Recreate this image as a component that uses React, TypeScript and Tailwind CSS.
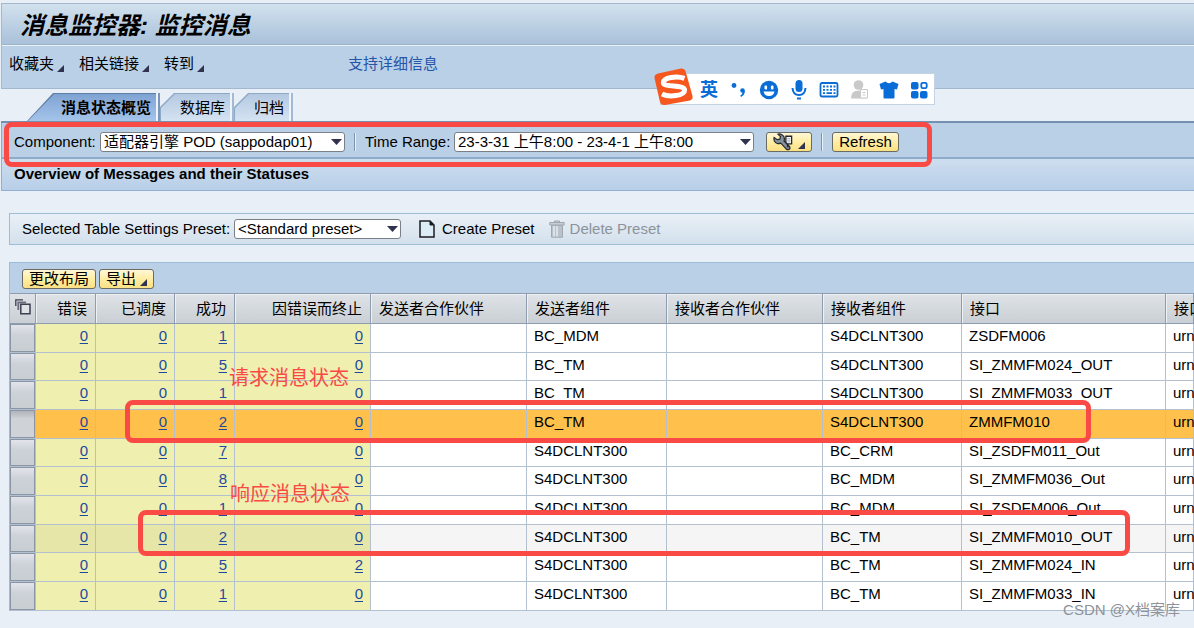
import { useState, type ReactNode } from "react";
import clsx from "clsx";

type Row = {
  counts: [number, number, number, number];
  sender: string;
  receiver: string;
  iface: string;
};

const ROWS: Row[] = [
  { counts: [0, 0, 1, 0], sender: "BC_MDM", receiver: "S4DCLNT300", iface: "ZSDFM006" },
  { counts: [0, 0, 5, 0], sender: "BC_TM", receiver: "S4DCLNT300", iface: "SI_ZMMFM024_OUT" },
  { counts: [0, 0, 1, 0], sender: "BC_TM", receiver: "S4DCLNT300", iface: "SI_ZMMFM033_OUT" },
  { counts: [0, 0, 2, 0], sender: "BC_TM", receiver: "S4DCLNT300", iface: "ZMMFM010" },
  { counts: [0, 0, 7, 0], sender: "S4DCLNT300", receiver: "BC_CRM", iface: "SI_ZSDFM011_Out" },
  { counts: [0, 0, 8, 0], sender: "S4DCLNT300", receiver: "BC_MDM", iface: "SI_ZMMFM036_Out" },
  { counts: [0, 0, 1, 0], sender: "S4DCLNT300", receiver: "BC_MDM", iface: "SI_ZSDFM006_Out" },
  { counts: [0, 0, 2, 0], sender: "S4DCLNT300", receiver: "BC_TM", iface: "SI_ZMMFM010_OUT" },
  { counts: [0, 0, 5, 2], sender: "S4DCLNT300", receiver: "BC_TM", iface: "SI_ZMMFM024_IN" },
  { counts: [0, 0, 1, 0], sender: "S4DCLNT300", receiver: "BC_TM", iface: "SI_ZMMFM033_IN" },
];

const HOVERED_ROW = 7;

const COLUMNS = [
  { id: "error", label: "错误", width: "w-[60px]", numeric: true },
  { id: "scheduled", label: "已调度", width: "w-[79px]", numeric: true },
  { id: "success", label: "成功", width: "w-[60px]", numeric: true },
  { id: "terminated", label: "因错误而终止", width: "w-[136px]", numeric: true },
  { id: "senderParty", label: "发送者合作伙伴", width: "w-[156px]", numeric: false },
  { id: "sender", label: "发送者组件", width: "w-[140px]", numeric: false },
  { id: "receiverParty", label: "接收者合作伙伴", width: "w-[156px]", numeric: false },
  { id: "receiver", label: "接收者组件", width: "w-[139px]", numeric: false },
  { id: "iface", label: "接口", width: "w-[204px]", numeric: false },
  { id: "namespace", label: "接口", width: "", numeric: false },
];

function Corner() {
  return (
    <svg viewBox="0 0 7 7" className="mb-[2px] size-[7px] shrink-0 self-end" aria-hidden="true">
      <path d="M7 0V7H0Z" fill="#30324f" />
    </svg>
  );
}

function MenuButton({ children }: { children: ReactNode }) {
  return (
    <button type="button" className="flex items-center gap-[3px] leading-5">
      {children}
      <Corner />
    </button>
  );
}

function YellowButton({ children, label, className }: { children: ReactNode; label?: string; className?: string }) {
  return (
    <button
      type="button"
      aria-label={label}
      className={clsx(
        "flex h-5 items-center justify-center rounded-[3px] border border-[#6b6a63] bg-linear-to-b from-[#fff7d6] via-[#ffeda3] to-[#fbe184] px-[6px] leading-[18px] whitespace-nowrap",
        className,
      )}
    >
      {children}
    </button>
  );
}

function Dropdown({ id, option, className }: { id: string; option: string; className: string }) {
  return (
    <div className={clsx("relative h-5", className)}>
      <select
        id={id}
        className="block h-full w-full appearance-none rounded-[3px] border border-[#7b8088] bg-white pr-5 pl-[3px] leading-[18px]"
      >
        <option>{option}</option>
      </select>
      <svg viewBox="0 0 11 6" className="pointer-events-none absolute top-[7px] right-[3px] h-[6px] w-[11px]" aria-hidden="true">
        <path d="M0 0H11L5.5 6Z" fill="#30324f" />
      </svg>
    </div>
  );
}

function Divider() {
  return <span className="h-[18px] w-[2px] border-l border-[#7f93ab] bg-[#e9f1f8]" />;
}

function Tab({ label, active, onClick }: { label: string; active: boolean; onClick: () => void }) {
  const outline = active
    ? "[clip-path:polygon(26px_0,100%_0,100%_100%,0_100%)]"
    : "[clip-path:polygon(14px_0,100%_0,100%_100%,0_100%,0_14px)]";
  return (
    <div className="flex">
      <button
        type="button"
        role="tab"
        aria-selected={active}
        onClick={onClick}
        className={clsx("h-7 pt-px pl-px", outline, active ? "bg-[#5f7da6]" : "bg-[#8ea9c6]")}
      >
        <span
          className={clsx(
            "flex h-full items-center bg-linear-to-b pt-px",
            outline,
            active
              ? "from-[#7fa3d2] to-[#a5c4ea] pr-[5px] pl-[33px] font-bold"
              : "from-[#b4c9e1] to-[#d5e3f2] pr-[5px] pl-[19px]",
          )}
        >
          {label}
        </span>
      </button>
      <span className={clsx("h-7 w-[4px] border-r-2 bg-[#eef4fa]", active ? "border-[#7896be]" : "border-[#a3bad4]")} />
    </div>
  );
}

function WrenchIcon() {
  return (
    <svg viewBox="0 0 22 18" className="h-[18px] w-[22px]" aria-hidden="true">
      <path d="M13.5 3H19.5V11H13.5Z" fill="#fff" stroke="#25272e" strokeWidth="1.4" />
      <path d="M15 5.5H18M15 7.2H18M15 8.9H18" stroke="#8f9aa3" strokeWidth=".8" />
      <path
        d="M5.200 .8L7.800 3.400L7.200 6L4.400 6.600L1.200 4.400C.4 7.500 2.200 10.200 5 10.600C6.400 10.800 7.400 10.600 8.200 10.200L14 16.400C15.200 17.600 17.600 17.200 17.800 15.400C17.900 14.600 17.500 14 17 13.500L11.600 8C12.400 5.400 11.600 2.600 9.400 1.400C8 .6 6.400 .4 5.200 .8Z"
        fill="#84929c"
        stroke="#25272e"
        strokeWidth="1.300"
      />
      <path d="M15.500 11.500V14.500" stroke="#25272e" strokeWidth="2" />
    </svg>
  );
}

function PageIcon() {
  return (
    <svg viewBox="0 0 16 18" className="h-[18px] w-4" aria-hidden="true">
      <path d="M1 1H11L15 5V17H1Z" fill="#dcecf6" stroke="#1b1c22" strokeWidth="1.5" />
      <path d="M11 1V5H15Z" fill="#1b1c22" stroke="#1b1c22" />
    </svg>
  );
}

function TrashIcon() {
  return (
    <svg viewBox="0 0 16 18" className="h-[18px] w-4" aria-hidden="true">
      <path d="M2.500 5H13.500V17.200H2.500Z" fill="#b9c1ca" stroke="#a0a7b0" />
      <path d="M5 6V16.500M8 6V16.500" stroke="#e6ebf0" strokeWidth="1.500" />
      <path d="M5.500 2.500V1H10.500V2.500M.8 2.500H15.200V5H.8Z" fill="#c6ced6" stroke="#a0a7b0" />
    </svg>
  );
}

function CopyIcon() {
  return (
    <svg viewBox="0 0 16 16" className="size-4" fill="none" aria-hidden="true">
      <path d="M.8 7V.8H8" stroke="#3c3f50" strokeWidth="1.300" />
      <path d="M3.300 11V3.300H11" stroke="#6a6d7e" strokeWidth="1.800" />
      <path d="M5.800 5.300H15V14.800H5.800Z" fill="#dfe3e7" stroke="#3c3f50" strokeWidth="1.500" />
    </svg>
  );
}

function SogouLogo() {
  return (
    <svg viewBox="0 0 40 38" className="absolute -top-[6px] -left-[7px] h-[38px] w-10" aria-hidden="true">
      <path d="M4 5.500L27 .5Q30.500 0 31.500 3L38.500 28Q39.300 31.500 36 32.500L11 37Q7 37.500 6 34L.5 10Q0 6.500 4 5.500Z" fill="#f6571f" />
      <path
        d="M30.500 10.300C23 7.500 9.500 9.500 9.300 14.500C9.200 19.800 30.500 16.300 30.600 22C30.500 28.300 14.500 29.300 8 26"
        fill="none"
        stroke="#fff"
        strokeWidth="5"
      />
    </svg>
  );
}

const IME_ITEMS: { label: string; icon: ReactNode }[] = [
  {
    label: "标点",
    icon: (
      <svg viewBox="0 0 20 20" className="size-5" fill="#0a6cd6">
        <circle cx="5" cy="5.500" r="2.400" />
        <circle cx="13.500" cy="10.500" r="2.300" />
        <path d="M15.800 10.500Q16 15 12 17L11.300 15.600Q13.500 14.300 13.500 12.500Z" />
      </svg>
    ),
  },
  {
    label: "表情",
    icon: (
      <svg viewBox="0 0 20 20" className="size-5">
        <circle cx="10" cy="10" r="9.200" fill="#0a6cd6" />
        <rect x="5.500" y="5.500" width="2.600" height="4" rx="1" fill="#fff" />
        <rect x="11.900" y="5.500" width="2.600" height="4" rx="1" fill="#fff" />
        <path d="M4.500 11.500H15.500Q14.500 16 10 16T4.500 11.500Z" fill="#fff" />
      </svg>
    ),
  },
  {
    label: "语音",
    icon: (
      <svg viewBox="0 0 20 20" className="size-5" fill="none" stroke="#0a6cd6" strokeWidth="2">
        <rect x="6.500" y="0" width="7" height="12" rx="3.500" fill="#0a6cd6" stroke="none" />
        <path d="M3.500 8Q4 15 10 15T16.500 8" />
        <path d="M8 18.500H12" />
      </svg>
    ),
  },
  {
    label: "键盘",
    icon: (
      <svg viewBox="0 0 20 20" className="size-5" fill="none" stroke="#0a6cd6" strokeWidth="1.800">
        <rect x="1.500" y="3" width="17" height="13.500" rx="1.500" />
        <path d="M4 6.500H6M7.500 6.500H9.500M11 6.500H13M14.500 6.500H16.500M4 9.800H6M7.500 9.800H9.500M11 9.800H13M14.500 9.800H16.500M4 13.200H6M7.500 13.200H13M14.500 13.200H16.500" />
      </svg>
    ),
  },
  {
    label: "账户",
    icon: (
      <svg viewBox="0 0 20 20" className="size-5" fill="#c9c9c9">
        <circle cx="9.500" cy="5" r="4.800" />
        <path d="M2 18.500Q2 10.500 9.500 10.500T17 18.500Z" />
        <path d="M11.500 9.500H18.500V18H11.500Z" fill="#fff" stroke="#c9c9c9" />
        <path d="M13.500 12.500H16.500M13.500 15H16.500" stroke="#c9c9c9" />
      </svg>
    ),
  },
  {
    label: "皮肤",
    icon: (
      <svg viewBox="0 0 20 20" className="size-5" fill="#0a6cd6">
        <path d="M6.500 1.500Q10 5 13.500 1.500L19.500 4L18 9.500L15.500 9V17.500Q15.500 18.500 14.500 18.500H5.500Q4.500 18.500 4.500 17.500V9L2 9.500L.5 4Z" />
      </svg>
    ),
  },
  {
    label: "工具箱",
    icon: (
      <svg viewBox="0 0 20 20" className="size-5" fill="#0a6cd6">
        <rect x="2" y="2" width="7.500" height="7.500" rx="2" />
        <rect x="12.300" y="2.800" width="5.400" height="5.400" rx="1.500" fill="none" stroke="#0a6cd6" strokeWidth="1.800" />
        <rect x="2" y="11" width="7.500" height="7.500" rx="2" />
        <rect x="11" y="11" width="7.500" height="7.500" rx="2" />
      </svg>
    ),
  },
];

function ImeBar() {
  return (
    <div className="absolute top-[73px] left-[660px] flex h-8 items-center border border-[#c3d3e4] bg-white pt-px pl-[33px]">
      <SogouLogo />
      <button type="button" className="w-[30px] text-[18px] leading-6 font-bold text-[#0a6cd6]">
        英
      </button>
      {IME_ITEMS.map((item) => (
        <button key={item.label} type="button" aria-label={item.label} className="flex w-[30px] justify-center">
          {item.icon}
        </button>
      ))}
    </div>
  );
}

const TABS = ["消息状态概览", "数据库", "归档"];

function MessageTable() {
  const [selected, setSelected] = useState(3);

  return (
    <table className="w-full table-fixed border-separate border-spacing-0">
      <thead>
        <tr className="h-[31px]">
          <th className="w-[26px] border-y border-r border-[#8f9db0] bg-linear-to-b from-[#dfe3e7] to-[#c9cfd4] p-0">
            <button type="button" aria-label="全选" className="flex w-full justify-center pb-1">
              <CopyIcon />
            </button>
          </th>
          {COLUMNS.map((col) => (
            <th
              key={col.id}
              className={clsx(
                "border-y border-r border-[#8f9db0] bg-linear-to-b from-[#dfe3e7] to-[#c9cfd4] px-2 pt-px pb-0 font-normal whitespace-nowrap shadow-[inset_1px_1px_0_#eef1f4]",
                col.width,
                col.numeric ? "text-right" : "text-left",
              )}
            >
              {col.label}
            </th>
          ))}
        </tr>
      </thead>
      <tbody>
        {ROWS.map((row, i) => {
          const isSelected = i === selected;
          const isHovered = i === HOVERED_ROW && !isSelected;
          const cell = "border-r border-b border-[#b3c0cf] px-[7px] pt-[2px] pb-0 align-top leading-5 whitespace-nowrap";
          const numberBg = isSelected ? "bg-[#ffc14b]" : isHovered ? "bg-[#e6e6a8]" : "bg-[#efefb0]";
          const textBg = isSelected ? "bg-[#ffc14b]" : isHovered ? "bg-[#f5f5f5]" : "bg-white";
          const texts = ["", row.sender, "", row.receiver, row.iface, "urn"];
          return (
            <tr key={row.iface} className="h-[29px] nth-[3n+2]:h-7">
              <td className="h-px border-r border-b border-[#b3c0cf] p-0">
                <button
                  type="button"
                  aria-label={`选择行 ${i + 1}`}
                  onClick={() => setSelected(i)}
                  className={clsx(
                    "block h-full w-full border border-[#8a95a5] bg-linear-to-b",
                    isSelected ? "from-[#b0b4ba] via-[#cfd3d7] via-30% to-[#cfd3d7]" : "from-[#e2e4ea] via-[#cdd2d8] via-40% to-[#c9ced3]",
                  )}
                />
              </td>
              {row.counts.map((count, c) => (
                <td key={COLUMNS[c].id} className={clsx(cell, numberBg, "text-right")}>
                  <a href="#messages" className="text-[#1e4a9e] underline underline-offset-2">
                    {count}
                  </a>
                </td>
              ))}
              {texts.map((text, c) => (
                <td key={COLUMNS[c + 4].id} className={clsx(cell, textBg)}>
                  {text}
                </td>
              ))}
            </tr>
          );
        })}
      </tbody>
    </table>
  );
}

export default function App() {
  const [tab, setTab] = useState(TABS[0]);

  return (
    <div className="relative min-h-screen overflow-hidden bg-[#e8eff6] pt-[3px] pl-px font-['Liberation_Sans','Noto_Sans_CJK_SC',sans-serif] text-[15px] text-black">
      <header className="border-y border-l border-[#a3b8cf] bg-[#bad0e7]">
        <h1 className="flex h-[41px] items-center border-b border-[#9db3cb] bg-linear-to-b from-[#d2e1ed] to-[#a9c1da] pt-1 pl-[18px] text-[24px] leading-8 font-bold italic">
          消息监控器: 监控消息
        </h1>
        <nav className="flex h-[43px] items-start gap-[15px] border-t border-[#eaf2f8] pt-2 pl-[7px]">
          <MenuButton>收藏夹</MenuButton>
          <MenuButton>相关链接</MenuButton>
          <MenuButton>转到</MenuButton>
          <a href="#support" className="ml-[129px] leading-5 text-[#2656a8]">
            支持详细信息
          </a>
        </nav>
      </header>

      <div role="tablist" className="mt-1 flex border-b-2 border-[#7490b0] pl-[26px]">
        {TABS.map((label) => (
          <Tab key={label} label={label} active={tab === label} onClick={() => setTab(label)} />
        ))}
      </div>

      <div className="relative flex h-9 items-center border-b-2 border-l border-[#8fabca] bg-[#bad0e7] pt-1 pl-3">
        <label htmlFor="component" className="w-[86px] leading-5">
          Component:
        </label>
        <Dropdown id="component" option="适配器引擎 POD (sappodap01)" className="w-[245px]" />
        <span className="ml-[9px] flex">
          <Divider />
        </span>
        <label htmlFor="range" className="ml-[9px] w-[89px] leading-5">
          Time Range:
        </label>
        <Dropdown id="range" option="23-3-31 上午8:00 - 23-4-1 上午8:00" className="w-[300px]" />
        <YellowButton label="设置" className="ml-3 w-[46px] gap-1">
          <WrenchIcon />
          <Corner />
        </YellowButton>
        <span className="mx-[9px] flex">
          <Divider />
        </span>
        <YellowButton className="w-[67px]">Refresh</YellowButton>
        <span className="pointer-events-none absolute -top-px left-[2px] z-10 h-[45px] w-[928px] rounded-lg border-[5px] border-[#f94a45]" />
      </div>
      <h2 className="h-8 border-b border-l border-[#8fb0d0] bg-linear-to-b from-[#cddeee] to-[#b8cfe8] pt-[5px] pl-3 text-[15px] leading-5 font-bold">
        Overview of Messages and their Statuses
      </h2>

      <div className="mt-[22px] ml-2 flex h-8 items-center border-y border-l border-[#9dbcd6] bg-linear-to-b from-[#e9f0f7] to-[#d3e0ec] pl-3">
        <label htmlFor="preset" className="w-[212px] leading-5">
          Selected Table Settings Preset:
        </label>
        <Dropdown id="preset" option="<Standard preset>" className="w-[167px]" />
        <button type="button" className="ml-[18px] flex items-center gap-[7px] leading-5">
          <PageIcon />
          Create Preset
        </button>
        <button type="button" disabled className="ml-[14px] flex items-center gap-[5px] leading-5 text-[#8d939b]">
          <TrashIcon />
          Delete Preset
        </button>
      </div>

      <section className="relative mt-[17px] ml-2 border-t border-l border-[#9dbcd6] bg-[#bad0e7]">
        <div className="flex h-[30px] items-center gap-[3px] pt-px pl-3">
          <YellowButton>更改布局</YellowButton>
          <YellowButton className="gap-1">
            导出
            <Corner />
          </YellowButton>
        </div>
        <MessageTable />

        <span className="pointer-events-none absolute top-[137px] left-[115px] h-[43px] w-[966px] rounded-lg border-[5px] border-[#f94a45]" />
        <span className="pointer-events-none absolute top-[247px] left-[128px] h-[46px] w-[992px] rounded-lg border-[5px] border-[#f94a45]" />
        <p className="pointer-events-none absolute top-[100px] left-[219px] text-[20px] leading-[30px] text-[#f94a45]">请求消息状态</p>
        <p className="pointer-events-none absolute top-[216px] left-[220px] text-[20px] leading-[30px] text-[#f94a45]">响应消息状态</p>
      </section>

      <ImeBar />
      <p className="pointer-events-none absolute right-[14px] bottom-2 text-[15px] leading-5 text-[#8e9399]">CSDN @X档案库</p>
    </div>
  );
}
